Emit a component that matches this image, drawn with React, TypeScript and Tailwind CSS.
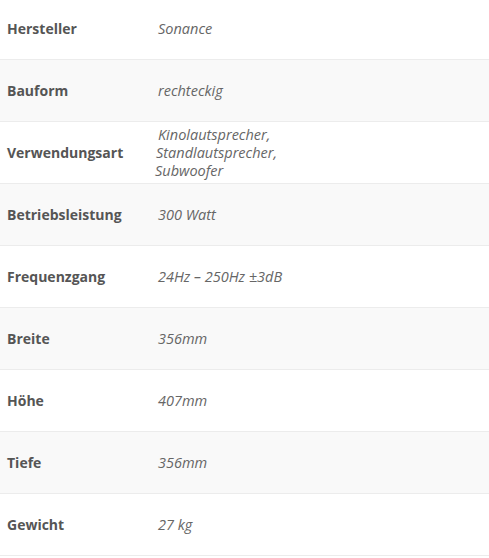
import React from 'react';

const specs = [
  { label: 'Hersteller', value: ['Sonance'] },
  { label: 'Bauform', value: ['rechteckig'] },
  { label: 'Verwendungsart', value: ['Kinolautsprecher,', 'Standlautsprecher,', 'Subwoofer'] },
  { label: 'Betriebsleistung', value: ['300 Watt'] },
  { label: 'Frequenzgang', value: ['24Hz – 250Hz ±3dB'] },
  { label: 'Breite', value: ['356mm'] },
  { label: 'Höhe', value: ['407mm'] },
  { label: 'Tiefe', value: ['356mm'] },
  { label: 'Gewicht', value: ['27 kg'] },
];

const indents = ['pl-[3px]', 'pl-[1px]', 'pl-0'];

const App = () => {
  return (
    <div className="w-[489px] h-[558px] overflow-hidden bg-white font-['Open_Sans',sans-serif] text-[14px]">
      <div className="-mt-[2px]">
        {specs.map((row, idx) => (
          <div
            key={idx}
            className={`flex items-center h-[62px] border-b border-[#ececec] ${idx % 2 === 1 ? 'bg-[#f9f9f9]' : 'bg-white'}`}
          >
            <div className="w-[155px] pl-[7px] font-bold text-[#555555]">{row.label}</div>
            <div className="flex-1 italic text-[14.5px] text-[#666666] leading-[18px]">
              {row.value.length > 1 ? (
                row.value.map((line, i) => (
                  <div key={i} className={indents[i]}>{line}</div>
                ))
              ) : (
                <div className="pl-[3px]">{row.value[0]}</div>
              )}
            </div>
          </div>
        ))}
      </div>
    </div>
  );
};

export default App;
